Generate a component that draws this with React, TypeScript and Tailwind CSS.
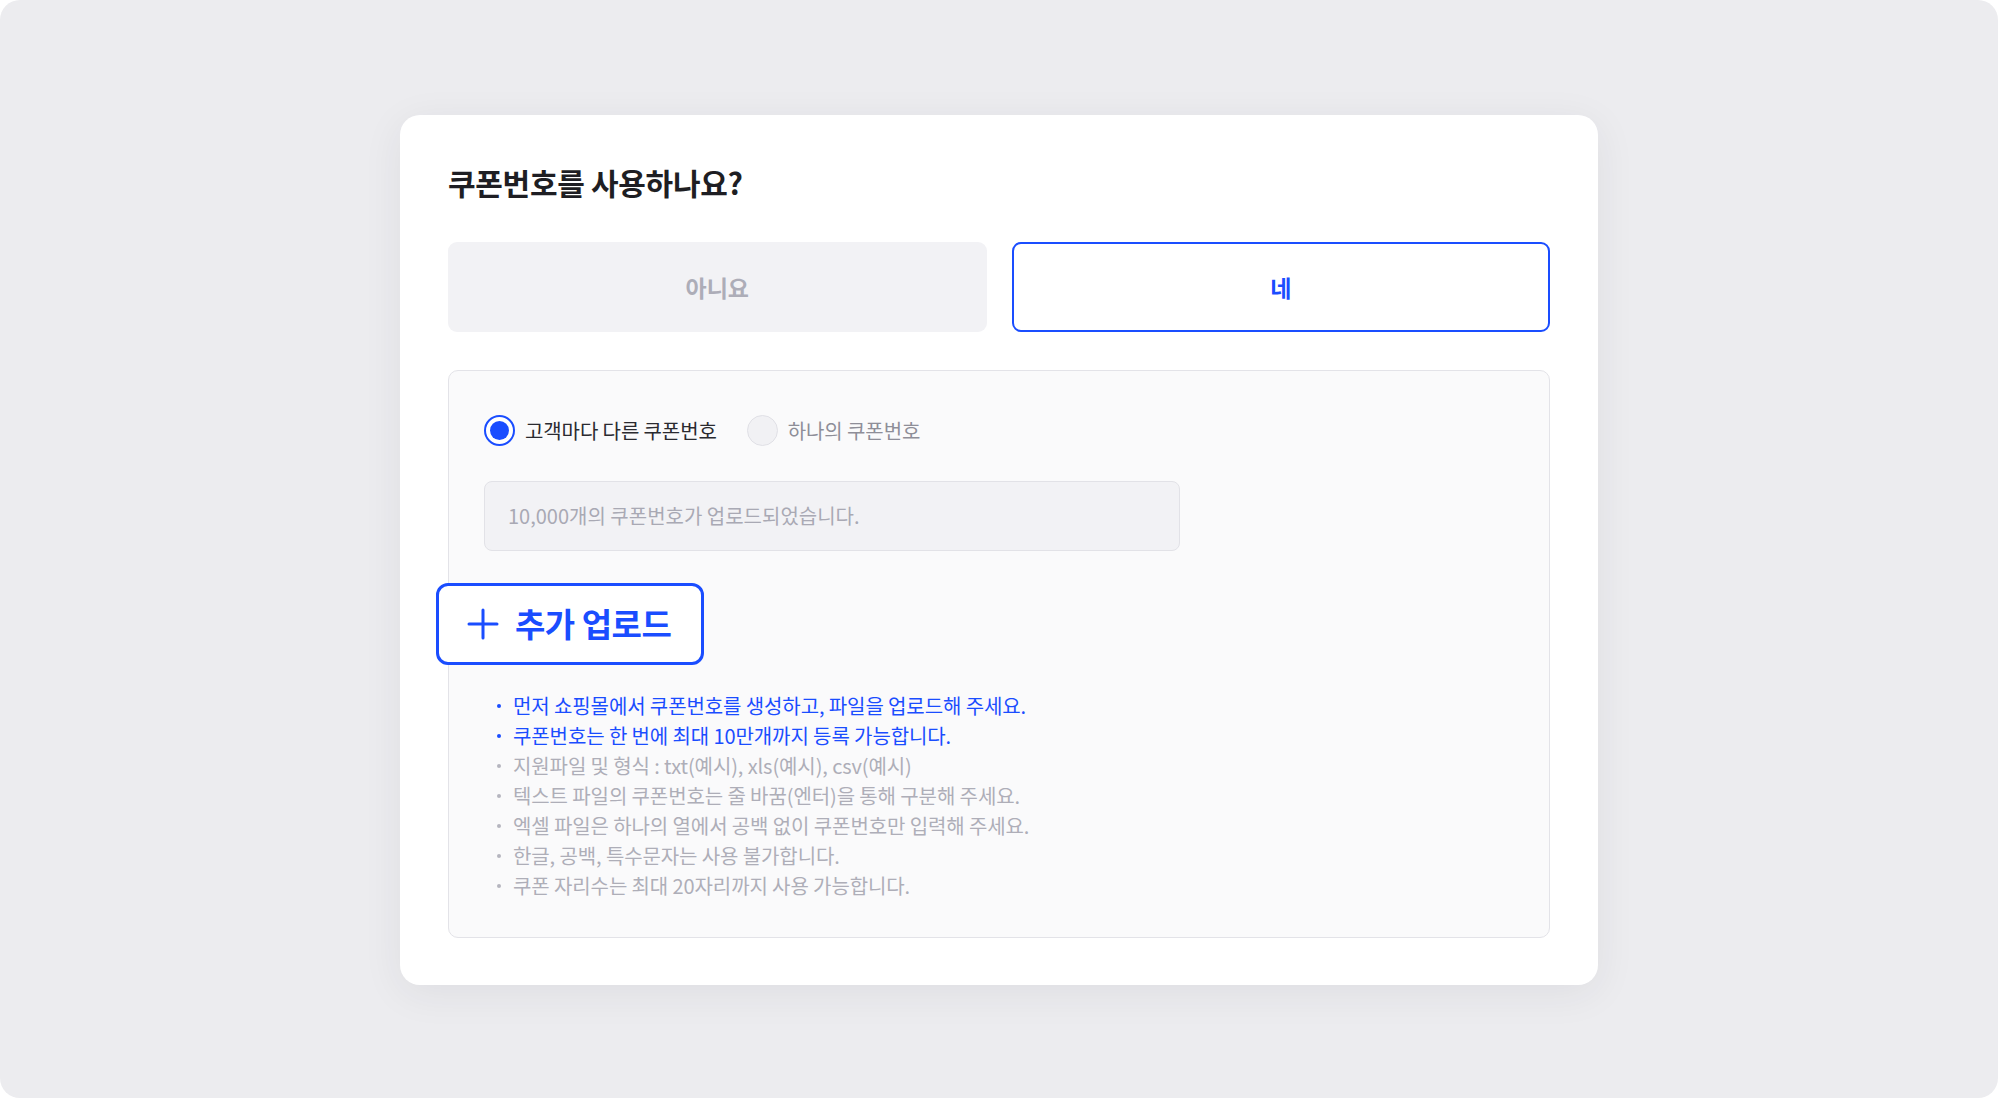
import { useState } from "react";

const guideLines = [
  { text: "먼저 쇼핑몰에서 쿠폰번호를 생성하고, 파일을 업로드해 주세요.", strong: true },
  { text: "쿠폰번호는 한 번에 최대 10만개까지 등록 가능합니다.", strong: true },
  { text: "지원파일 및 형식 : txt(예시), xls(예시), csv(예시)", strong: false },
  { text: "텍스트 파일의 쿠폰번호는 줄 바꿈(엔터)을 통해 구분해 주세요.", strong: false },
  { text: "엑셀 파일은 하나의 열에서 공백 없이 쿠폰번호만 입력해 주세요.", strong: false },
  { text: "한글, 공백, 특수문자는 사용 불가합니다.", strong: false },
  { text: "쿠폰 자리수는 최대 20자리까지 사용 가능합니다.", strong: false },
];

function Radio({ checked, label, onClick }: { checked: boolean; label: string; onClick: () => void }) {
  return (
    <button onClick={onClick} className="flex items-center gap-[10px]">
      {checked ? (
        <span className="flex h-[31px] w-[31px] items-center justify-center rounded-full border-2 border-[#1a4dff] bg-white">
          <span className="h-[19px] w-[19px] rounded-full bg-[#1a4dff]" />
        </span>
      ) : (
        <span className="h-[31px] w-[31px] rounded-full border border-[#e0e0e6] bg-[#f1f1f4]" />
      )}
      <span className={`text-[20px] tracking-[-0.1px] ${checked ? "text-[#2a2a30]" : "text-[#8e8e98]"}`}>{label}</span>
    </button>
  );
}

export default function App() {
  const [useCoupon, setUseCoupon] = useState(true);
  const [perCustomer, setPerCustomer] = useState(true);

  return (
    <main
      className="min-h-screen bg-white"
      style={{ fontFamily: '"Noto Sans CJK KR", "Noto Sans", sans-serif' }}
    >
      <div className="flex h-[1098px] w-[1998px] items-start justify-center rounded-[20px] bg-[#ececef] pt-[115px]">
        <section className="w-[1198px] rounded-[20px] bg-white px-[48px] pb-[47px] pt-[48px] shadow-[0_8px_40px_rgba(40,40,60,0.07)]">
          <h1 className="text-[30px] font-bold leading-[39px] tracking-[-0.3px] text-[#1e1e23]">쿠폰번호를 사용하나요?</h1>

          {/* yes / no toggle */}
          <div className="mt-[40px] grid grid-cols-2 gap-[25px]">
            <button
              onClick={() => setUseCoupon(false)}
              className={`h-[90px] rounded-[9px] text-[23px] font-semibold ${
                !useCoupon ? "border-2 border-[#1a4dff] bg-white text-[#1a4dff]" : "bg-[#f2f2f5] text-[#adadb8]"
              }`}
            >
              아니요
            </button>
            <button
              onClick={() => setUseCoupon(true)}
              className={`h-[90px] rounded-[9px] text-[23px] font-semibold ${
                useCoupon ? "border-2 border-[#1a4dff] bg-white text-[#1a4dff]" : "bg-[#f2f2f5] text-[#adadb8]"
              }`}
            >
              네
            </button>
          </div>

          {/* upload panel */}
          <div className="mt-[38px] rounded-[10px] border border-[#e3e3e8] bg-[#fafafb] px-[35px] pb-[36px] pt-[44px]">
            <div className="flex items-center gap-[30px]">
              <Radio checked={perCustomer} label="고객마다 다른 쿠폰번호" onClick={() => setPerCustomer(true)} />
              <Radio checked={!perCustomer} label="하나의 쿠폰번호" onClick={() => setPerCustomer(false)} />
            </div>

            <div className="mt-[35px] flex h-[70px] w-[696px] items-center rounded-[8px] border border-[#e2e2e7] bg-[#f2f2f5] px-[23px]">
              <span className="text-[20px] tracking-[0px] text-[#a9a9b4]">10,000개의 쿠폰번호가 업로드되었습니다.</span>
            </div>

            <button className="-ml-[48px] mt-[32px] flex h-[82px] w-[268px] items-center gap-[16px] rounded-[12px] border-[3px] border-[#1a4dff] bg-white pl-[28px]">
              <svg width="32" height="32" viewBox="0 0 32 32" fill="none" stroke="#1a4dff" strokeWidth="3" strokeLinecap="round">
                <path d="M16 2v28M2 16h28" />
              </svg>
              <span className="text-[33px] font-bold tracking-[-0.5px] text-[#1a4dff]">추가 업로드</span>
            </button>

            <ul className="mt-[26px] pl-[13px]">
              {guideLines.map((line) => (
                <li key={line.text} className="flex h-[30px] items-center gap-[12px]">
                  <span className={`h-[4px] w-[4px] rounded-full ${line.strong ? "bg-[#1a4dff]" : "bg-[#b5b5bf]"}`} />
                  <span className={`text-[20px] tracking-[-0.1px] ${line.strong ? "text-[#1a4dff]" : "text-[#aeaeb8]"}`}>
                    {line.text}
                  </span>
                </li>
              ))}
            </ul>
          </div>
        </section>
      </div>
    </main>
  );
}
